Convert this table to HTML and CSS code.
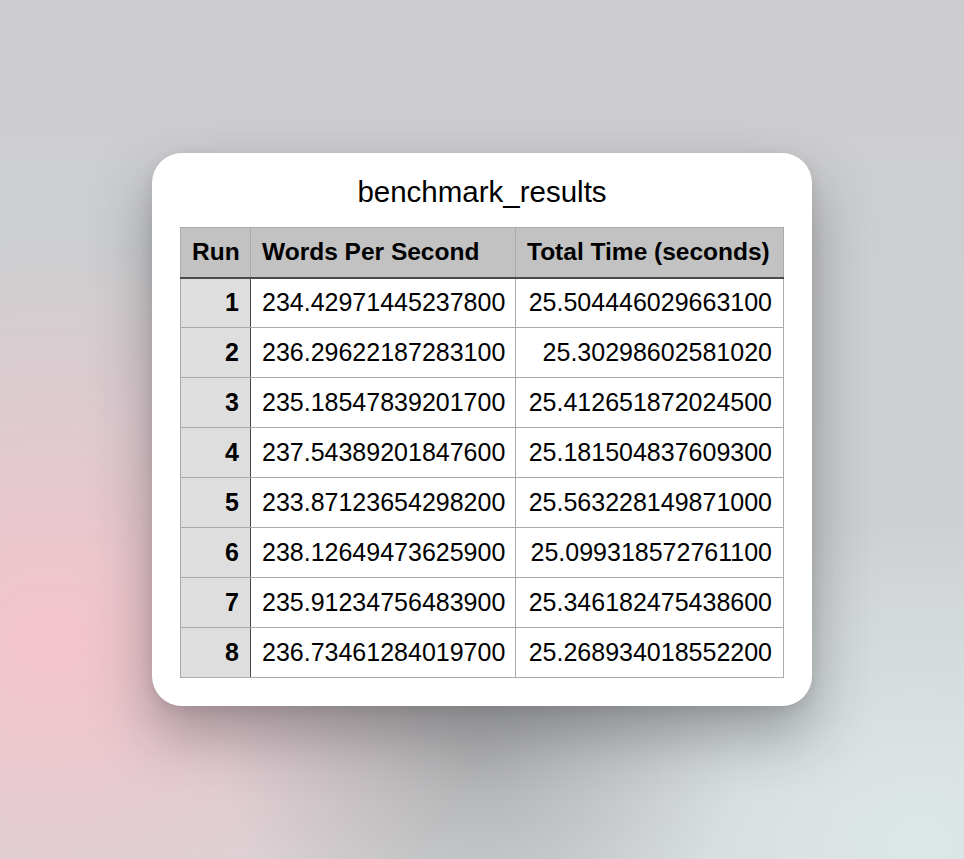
FILE: index.html
```html
<!DOCTYPE html>
<html>
<head>
<meta charset="utf-8">
<link rel="stylesheet" href="styles.css">
</head>
<body>
<div class="stage">
  <div class="card">
    <div class="title">benchmark_results</div>
    <table class="grid">
      <colgroup><col class="c-run"><col class="c-wps"><col class="c-tt"></colgroup>
      <thead>
        <tr><th>Run</th><th>Words Per Second</th><th>Total Time (seconds)</th></tr>
      </thead>
      <tbody>
        <tr><td class="run">1</td><td>234.42971445237800</td><td>25.504446029663100</td></tr>
        <tr><td class="run">2</td><td>236.29622187283100</td><td>25.30298602581020</td></tr>
        <tr><td class="run">3</td><td>235.18547839201700</td><td>25.412651872024500</td></tr>
        <tr><td class="run">4</td><td>237.54389201847600</td><td>25.181504837609300</td></tr>
        <tr><td class="run">5</td><td>233.87123654298200</td><td>25.563228149871000</td></tr>
        <tr><td class="run">6</td><td>238.12649473625900</td><td>25.099318572761100</td></tr>
        <tr><td class="run">7</td><td>235.91234756483900</td><td>25.346182475438600</td></tr>
        <tr><td class="run">8</td><td>236.73461284019700</td><td>25.268934018552200</td></tr>
      </tbody>
    </table>
  </div>
</div>
</body>
</html>
```
FILE: styles.css
```css
html, body {
  margin: 0;
  padding: 0;
  height: 100%;
}
body {
  font-family: "Liberation Sans", Arial, Helvetica, sans-serif;
  color: #000;
  background-color: #cfd0d2;
  background-image:
    radial-gradient(ellipse 260px 200px at 480px 760px, rgba(150,150,152,0.55), rgba(150,150,152,0) 100%),
    radial-gradient(ellipse 460px 400px at 50px 640px, rgba(245,196,204,1), rgba(245,196,204,0) 100%),
    radial-gradient(ellipse 420px 320px at 920px 840px, rgba(222,232,232,0.95), rgba(222,232,232,0) 100%),
    linear-gradient(180deg, #cdcdcf 0%, #cdd0d2 60%, #d3d6d7 100%);
}
.stage {
  height: 859px;
  display: flex;
  align-items: center;
  justify-content: center;
}
.card {
  background: #fff;
  border-radius: 30px;
  padding: 20px 28px 28px 28px;
  box-shadow: 0 28px 60px rgba(40, 40, 45, 0.38), 0 4px 14px rgba(0, 0, 0, 0.08);
  display: flex;
  flex-direction: column;
  align-items: center;
}
.title {
  font-size: 29.5px;
  line-height: 38px;
  height: 38px;
  margin-bottom: 16px;
  text-align: center;
}
.grid {
  border-collapse: collapse;
  font-size: 25px;
  table-layout: fixed;
  width: 603px;
}
.c-run { width: 70px; }
.c-wps { width: 265px; }
.c-tt { width: 268px; }
.grid th, .grid td {
  border: 1px solid #aaaaaa;
  height: 50px;
  padding: 0 11px;
  white-space: nowrap;
  box-sizing: border-box;
}
.grid th {
  background: #c1c2c1;
  text-align: left;
  font-weight: bold;
  font-size: 24.5px;
  border-bottom: 2px solid #4a4a4a;
}
.grid td {
  text-align: right;
}
.grid td.run {
  background: #dedede;
  font-weight: bold;
  border-right: 1px solid #4a4a4a;
}
```
